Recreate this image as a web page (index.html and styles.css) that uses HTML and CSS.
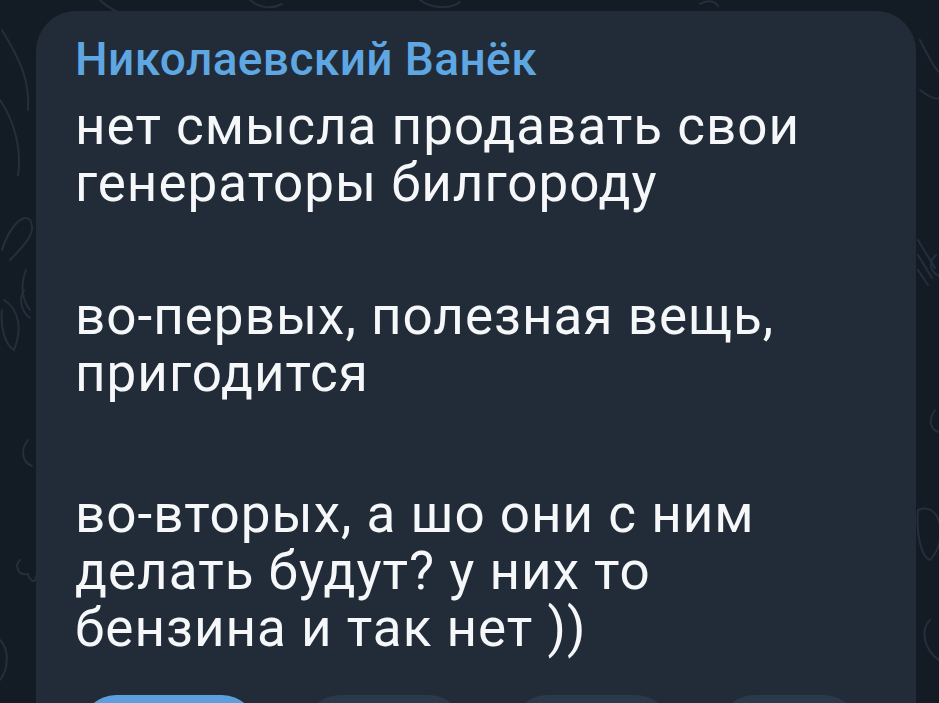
FILE: index.html
```html
<!DOCTYPE html>
<html lang="ru">
<head>
<meta charset="utf-8">
<title>Сообщение</title>
<link rel="stylesheet" href="styles.css">
</head>
<body>
<svg class="doodles" width="939" height="703" viewBox="0 0 939 703" aria-hidden="true">
  <g fill="none" stroke="#252f3c" stroke-width="2" stroke-linecap="round">
    <path d="M2 30 C20 60 30 80 28 110"/>
    <path d="M0 100 C14 120 22 150 18 175"/>
    <path d="M10 260 C30 240 36 230 30 220 C22 212 8 230 2 250"/>
    <path d="M4 300 C20 310 22 330 14 350 C6 345 0 330 2 310"/>
    <path d="M26 270 C20 285 22 300 30 310 M24 290 C18 300 22 312 30 318"/>
    <path d="M28 440 C20 450 22 462 32 466"/>
    <path d="M20 560 C14 566 18 576 28 574 C30 582 36 584 36 576"/>
    <path d="M0 640 C10 650 8 670 0 680"/>
    <path d="M100 0 C110 10 130 20 150 16"/>
    <path d="M250 0 C260 8 270 10 282 4"/>
    <path d="M420 0 C430 8 450 10 460 2"/>
    <path d="M700 4 C706 0 714 0 718 6"/>
    <path d="M920 40 C930 60 936 70 939 72"/>
    <path d="M920 90 C928 96 936 100 939 98"/>
    <path d="M936 255 C928 262 930 272 939 276"/>
    <path d="M918 240 L935 268 M918 255 L932 278 M918 270 L928 285"/>
    <path d="M935 410 C928 420 930 430 939 432"/>
    <path d="M918 510 C940 500 950 540 930 560 C920 556 916 530 918 510"/>
    <path d="M930 620 C920 630 924 650 939 660"/>
  </g>
</svg>
<main class="chat">
  <article class="bubble">
    <h1 class="author">Николаевский Ванёк</h1>
    <p class="para">нет смысла продавать свои<br>генераторы билгороду</p>
    <p class="para para-2">во-первых, полезная вещь,<br>пригодится</p>
    <p class="para para-3">во-вторых, а шо они с ним<br>делать будут? у них то<br>бензина и так нет ))</p>
    <div class="reactions">
      <span class="reaction reaction-active"></span>
      <span class="reaction"></span>
      <span class="reaction"></span>
      <span class="reaction reaction-small"></span>
    </div>
  </article>
</main>
</body>
</html>
```

FILE: styles.css
```css
html, body {
  margin: 0;
  padding: 0;
  width: 939px;
  height: 703px;
  overflow: hidden;
  background: #131b25;
}

body {
  position: relative;
  font-family: Roboto, "Noto Sans", "Liberation Sans", sans-serif;
}

.doodles {
  position: absolute;
  left: 0;
  top: 0;
  z-index: 0;
}

.chat {
  position: relative;
  z-index: 1;
  padding: 11px 0 0 36px;
}

.bubble {
  width: 880px;
  height: 760px;
  box-sizing: border-box;
  padding: 24px 39px 0 39px;
  background: #222c38;
  border-radius: 40px 40px 0 0;
}

.author {
  margin: 0;
  font-size: 46px;
  line-height: 48px;
  font-weight: 500;
  color: #5fa7e2;
  letter-spacing: 0.4px;
}

.para {
  margin: 15px 0 0 0;
  font-size: 53px;
  line-height: 57px;
  font-weight: 400;
  letter-spacing: 1px;
  color: #f5f7f9;
}

.para-2 {
  margin-top: 76px;
}

.para-3 {
  margin-top: 84px;
}

.reactions {
  display: flex;
  gap: 48px;
  margin-top: 38px;
  margin-left: 6px;
}

.reaction {
  display: block;
  width: 159px;
  height: 70px;
  border-radius: 35px;
  background: #2b3a4b;
}

.reaction-active {
  width: 176px;
  background: #5c9fdc;
}

.reaction-small {
  width: 140px;
}
```
